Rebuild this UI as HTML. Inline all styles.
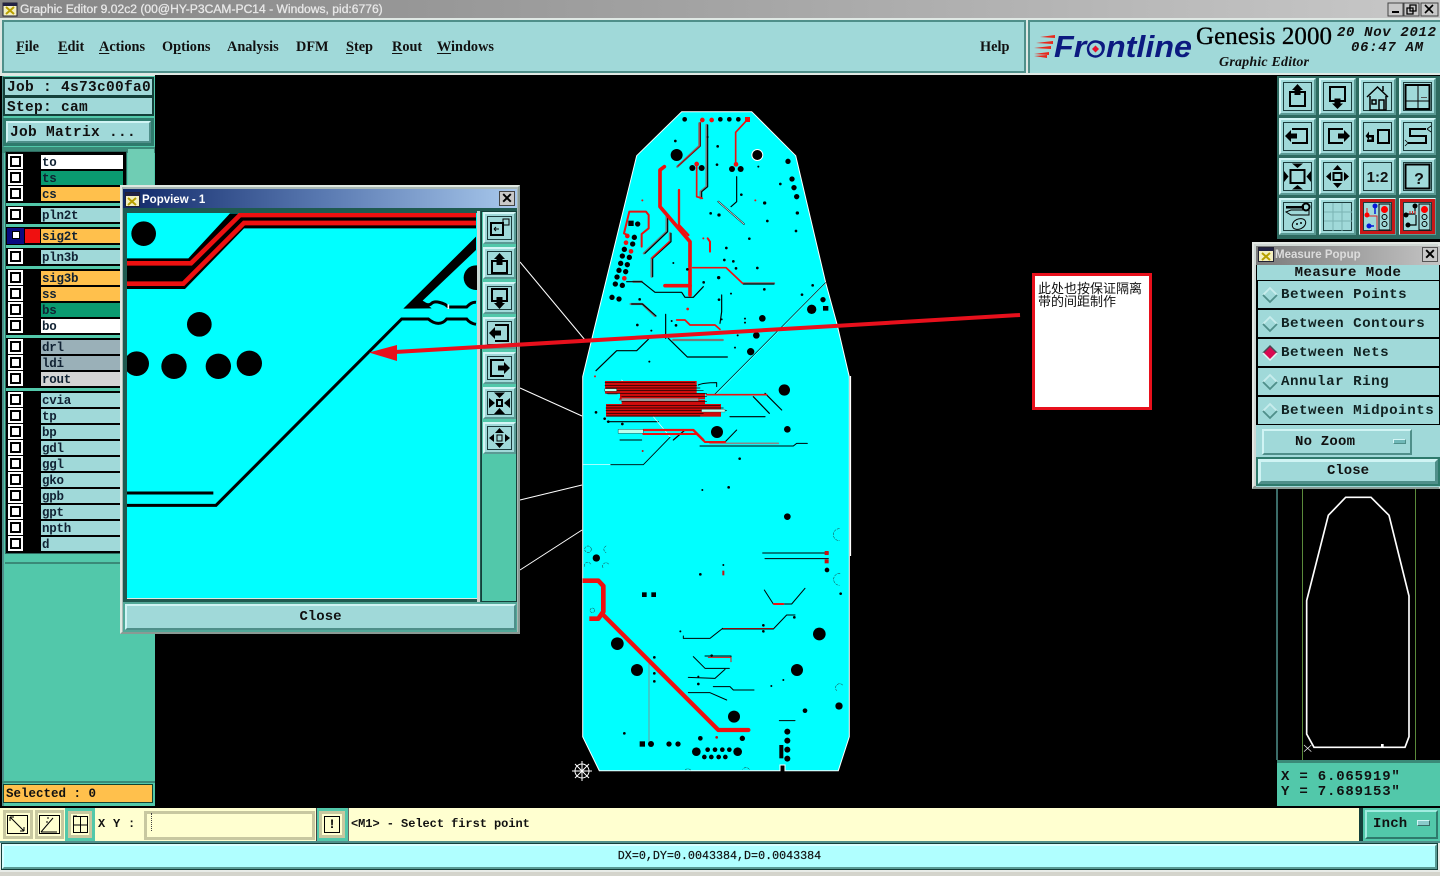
<!DOCTYPE html>
<html><head><meta charset="utf-8"><title>Graphic Editor</title>
<style>
html,body{margin:0;padding:0;background:#000;width:1440px;height:876px;overflow:hidden}
div{position:absolute;box-sizing:border-box}
svg{position:absolute;left:0;top:0}
.m{font-family:"Liberation Mono",monospace;font-weight:bold;color:#111;white-space:pre}
.s{font-family:"Liberation Serif",serif;font-weight:bold;color:#111;font-size:14.3px;white-space:pre;top:39px}
.s u{text-decoration-thickness:1px;text-underline-offset:2px}
.lb{left:41px;width:82px;height:14px;font:bold 12.5px/16px "Liberation Mono",monospace;color:#123;padding-left:1px;background:#a0d9d9;letter-spacing:-.25px;white-space:pre;overflow:hidden}
.cb{left:12px;width:7px;height:7px;background:#fff;box-shadow:0 0 0 2px #000,0 0 0 4px #fff}
.o{background:#ffc04c}.g{background:#0a9a70}.w{background:#fff}.d{background:#9ab0b8}
.sep{left:6px;width:120px;height:3px;background:#52c8aa}
.bev{background:#a0d9d9;border:2px solid;border-color:#d0f4f4 #4f8f8a #4f8f8a #d0f4f4}
.row{left:1258px;width:181px;height:27px;background:#a0d9d9;font:bold 14.2px/28px "Liberation Mono",monospace;letter-spacing:.5px;padding-left:23px;color:#122;white-space:pre}
.ttl{font:bold 11px/18px "Liberation Sans",sans-serif;white-space:pre}
</style></head><body>

<!-- title bar -->
<div style="left:0;top:0;width:1440px;height:18px;background:linear-gradient(90deg,#858585,#a4a4a4 50%,#c8c8c8)"></div>
<div class="ttl" style="left:20px;top:0;color:#e8e8e8;font-size:12.1px;font-weight:normal;-webkit-text-stroke:.3px #e8e8e8">Graphic Editor 9.02c2 (00@HY-P3CAM-PC14 - Windows, pid:6776)</div>
<div style="left:0;top:18px;width:1440px;height:58px;background:#e0e8e4"></div>
<div style="left:2px;top:20px;width:1024px;height:53px;background:#a0d9d9;border:2px solid;border-color:#4f8f8a #4f8f8a #4f8f8a #4f8f8a"></div>
<div style="left:1028px;top:20px;width:412px;height:53px;background:#a0d9d9;border-top:2px solid #4f8f8a;border-left:2px solid #4f8f8a"></div>

<div class="s" style="left:16px"><u>F</u>ile</div>
<div class="s" style="left:58px"><u>E</u>dit</div>
<div class="s" style="left:99px"><u>A</u>ctions</div>
<div class="s" style="left:162px">O<u>p</u>tions</div>
<div class="s" style="left:227px">Analysis</div>
<div class="s" style="left:296px">DFM</div>
<div class="s" style="left:346px"><u>S</u>tep</div>
<div class="s" style="left:392px"><u>R</u>out</div>
<div class="s" style="left:437px"><u>W</u>indows</div>
<div class="s" style="left:980px">Help</div>

<!-- canvas black -->
<div style="left:155px;top:75px;width:1285px;height:733px;background:#000"></div>

<!-- PCB + logo layer -->
<svg width="1440" height="876" viewBox="0 0 1440 876">
 <!-- window icon -->
 <rect x="3" y="3" width="14" height="13" fill="#f4f0c0" stroke="#223"/><rect x="3" y="3" width="14" height="3" fill="#224"/><path d="M6 7l8 7M14 7l-8 7" stroke="#b8a000" stroke-width="2"/>
 <!-- window ctl -->
 <g font-family="Liberation Sans" font-size="11" font-weight="bold">
  <rect x="1388" y="3" width="15" height="13" fill="#c8c8c8" stroke="#444"/><rect x="1392" y="11" width="7" height="2" fill="#000"/>
  <rect x="1404" y="3" width="15" height="13" fill="#c8c8c8" stroke="#444"/><path d="M1410 5h6v6h-6zM1407 8h6v6h-6z" fill="none" stroke="#000" stroke-width="1.3"/>
  <rect x="1421" y="3" width="17" height="13" fill="#c8c8c8" stroke="#444"/><path d="M1425 5l8 8M1433 5l-8 8" stroke="#000" stroke-width="1.6"/>
 </g>
 <!-- Frontline logo -->
 <path d="M1055 35l-15 2 15 1zM1053 41l-17 2 17 1zM1051 46l-17 2 17 1zM1049 52l-15 2 15 1zM1047 55l-13 1 13 2z" fill="#e8281c"/>
 <text x="1054" y="57" font-family="Liberation Sans" font-weight="bold" font-style="italic" font-size="31" fill="#0c1a80" textLength="138" lengthAdjust="spacingAndGlyphs">Frontline</text>
 <circle cx="1095.5" cy="49" r="7.5" fill="#a0d9d9" stroke="#0c1a80" stroke-width="2.4"/><path d="M1095.5 45.500l3.500 3.500-3.500 3.500-3.500-3.500z" fill="#e8102c"/>
 <text x="1196" y="44" font-family="Liberation Serif" font-size="25" fill="#000" stroke="#000" stroke-width=".3" textLength="136">Genesis 2000</text>
 <text x="1219" y="66" font-family="Liberation Serif" font-weight="bold" font-style="italic" font-size="14" fill="#111" textLength="90">Graphic Editor</text>
 <text x="1337" y="36" font-family="Liberation Mono" font-weight="bold" font-style="italic" font-size="14" fill="#111" textLength="99">20 Nov 2012</text>
 <text x="1351" y="51" font-family="Liberation Mono" font-weight="bold" font-style="italic" font-size="14" fill="#111" textLength="72">06:47 AM</text>

 <!-- PCB -->
 <path d="M681.700 111.700H751.700L795.700 155.700L825.700 282.700L836.700 323L849.300 376.700V736.700L838.300 770.700H785V765H780V770.700H599.300L582.700 736.700V376.700L594 330L636.700 155.700Z" fill="#0ff" stroke="#fff" stroke-width="1"/>
 <path d="M850.500 376V556" stroke="#fff" stroke-width="1.200"/>

 <!-- white leader lines -->
 <path d="M520 262L585 340M520 388L582 416M520 500L582 485M520 570L582 530" stroke="#fff" stroke-width="1" fill="none"/>

 <!-- PCB upper in zoom coords -->
 <g transform="translate(570,100) scale(.33333)" fill="none" stroke-linecap="round" stroke-linejoin="round">
  <g stroke="#777" stroke-width="7">
   <path d="M322,200L388,138V70M410,75V260L392,275V295M222,460L290,395V345M245,530V475L300,425V400M182,612H217L255,648M310,720H458M520,550H612M150,898H385M115,880H140M190,545H215"/>
  </g>
  <g stroke="#000" stroke-width="3.500">
   <path d="M324,198L391,138V68M413,75V260L395,275V295M500,230V305L483,320M225,460L293,395V345M248,530V475L303,425V400M170,545H215L255,577H335L345,592H370L400,560M185,612H217L258,648M287,643V715M295,715L352,771H472M78,812L140,752H200L235,718M455,585V635L450,670M520,552H612M585,880L635,930M550,890L598,940M112,965H265M480,950H585M345,990L310,1020"/>
  </g>
  <path d="M432,885L767,548" stroke="#000" stroke-width="2"/>
  <path d="M437,885L767,550" stroke="#fff" stroke-width="1"/>
  <path d="M445,305L522,372" stroke="#000" stroke-width="5"/><path d="M445,305L522,372" stroke="#fff" stroke-width="2"/>
  <path d="M155,840L250,950L300,1010" stroke="#fff" stroke-width="2"/>
  <g stroke="#ee1010">
   <path d="M283,200L270,210V320L360,425V585" stroke-width="11"/>
   <path d="M285,557H360" stroke-width="11"/>
   <path d="M327,270V375L355,405" stroke-width="7"/>
   <path d="M368,503H468L518,550" stroke-width="5"/>
   <path d="M533,58L497,97V190" stroke-width="5"/>
   <path d="M380,195V290L397,295" stroke-width="5"/>
   <path d="M172,405L162,400L178,335H228L236,345V385L215,402V440" stroke-width="6"/>
   <path d="M413,415L420,425V455" stroke-width="6"/>
   <path d="M245,475L298,425" stroke-width="4"/>
   <path d="M320,660H345L360,675H435L450,688" stroke-width="5"/>
   <path d="M397,60L390,70V138L324,198" stroke-width="2"/>
   <path d="M410,884H590" stroke-width="5"/>
   <path d="M220,990H370L400,1020" stroke-width="7"/>
  </g>
  <!-- stripes -->
  <rect x="105" y="843" width="275" height="38" fill="#d00c0c"/>
  <rect x="150" y="880" width="255" height="18" fill="#d00c0c"/>
  <rect x="108" y="912" width="345" height="38" fill="#d00c0c"/>
  <rect x="155" y="900" width="250" height="12" fill="#d00c0c"/>
  <g stroke="#000" stroke-width="2">
   <path d="M105,848H375M105,856H380M108,864H390M105,872H400M110,880H410M155,890H410M155,905H410M110,916H450M108,924H460M108,932H470M110,940H400M110,948H390"/>
  </g>
  <rect x="105" y="866" width="35" height="8" fill="#bfe" stroke="#000"/>
  <rect x="155" y="895" width="230" height="8" fill="#999"/>
  <rect x="395" y="928" width="70" height="8" fill="#bfe" stroke="#333"/>
  <rect x="145" y="988" width="75" height="12" fill="#bfe" stroke="#000"/>
  <path d="M385,855Q400,848 440,848V860" stroke="#000" stroke-width="3"/>
  <!-- dots -->
  <g fill="#000" stroke="none">
   <circle cx="320" cy="165" r="18"/><circle cx="562" cy="165" r="18" fill="#fff"/><circle cx="562" cy="165" r="15"/>
   <circle cx="344" cy="58" r="7"/><circle cx="451" cy="58" r="7"/><circle cx="478" cy="58" r="7"/><circle cx="505" cy="58" r="7"/>
   <ellipse cx="367" cy="204" rx="9" ry="9"/><ellipse cx="395" cy="204" rx="9" ry="9"/><circle cx="486" cy="207" r="9"/><circle cx="512" cy="207" r="9"/>
   <circle cx="654" cy="184" r="8"/><circle cx="666" cy="237" r="8"/><circle cx="672" cy="263" r="8"/><circle cx="680" cy="290" r="8"/><circle cx="682" cy="339" r="5"/>
   <rect x="175" y="362" width="16" height="16"/><circle cx="203" cy="372" r="8"/><circle cx="193" cy="412" r="8"/><circle cx="188" cy="432" r="8"/>
   <circle cx="163" cy="448" r="8"/><circle cx="157" cy="468" r="8"/><circle cx="178" cy="472" r="8"/><circle cx="152" cy="490" r="8"/><circle cx="172" cy="494" r="8"/><circle cx="147" cy="511" r="8"/><circle cx="167" cy="515" r="8"/><circle cx="141" cy="531" r="8"/><circle cx="136" cy="552" r="8"/><circle cx="157" cy="556" r="8"/><circle cx="126" cy="592" r="8"/><circle cx="147" cy="597" r="8"/>
   <circle cx="725" cy="628" r="14"/><circle cx="759" cy="599" r="8"/><rect x="759" y="618" width="16" height="14"/><circle cx="577" cy="655" r="10"/><circle cx="559" cy="706" r="10"/><circle cx="542" cy="755" r="11"/>
   <circle cx="643" cy="870" r="17"/><circle cx="652" cy="988" r="10"/><circle cx="441" cy="996" r="18"/>
   <circle cx="316" cy="123" r="4"/><circle cx="413" cy="111" r="3"/><circle cx="443" cy="139" r="4"/><circle cx="441" cy="194" r="4"/><circle cx="565" cy="200" r="3"/><circle cx="631" cy="252" r="4"/><circle cx="514" cy="284" r="4"/><circle cx="584" cy="309" r="5"/><circle cx="422" cy="340" r="4"/><circle cx="447" cy="345" r="5"/><circle cx="592" cy="363" r="4"/><circle cx="678" cy="393" r="4"/><circle cx="538" cy="416" r="4"/><circle cx="469" cy="444" r="4"/><circle cx="463" cy="480" r="4"/><circle cx="490" cy="484" r="4"/><circle cx="562" cy="504" r="4"/><circle cx="498" cy="505" r="4"/><circle cx="352" cy="508" r="4"/><circle cx="310" cy="489" r="3"/><circle cx="446" cy="533" r="5"/><circle cx="401" cy="547" r="4"/><circle cx="583" cy="568" r="4"/><circle cx="728" cy="556" r="4"/><circle cx="696" cy="584" r="4"/><circle cx="483" cy="581" r="3"/><circle cx="447" cy="599" r="4"/><circle cx="209" cy="598" r="4"/><circle cx="202" cy="675" r="4"/><circle cx="244" cy="692" r="3"/><circle cx="305" cy="663" r="3"/><circle cx="318" cy="676" r="4"/><circle cx="455" cy="658" r="3"/><circle cx="525" cy="656" r="3"/><circle cx="525" cy="668" r="3"/><circle cx="503" cy="706" r="3"/><circle cx="495" cy="743" r="3"/><circle cx="238" cy="785" r="3"/><circle cx="78" cy="937" r="4"/><circle cx="104" cy="956" r="4"/><circle cx="157" cy="972" r="4"/><circle cx="115" cy="965" r="4"/>
  </g>
  <g fill="#ee1010" stroke="none">
   <circle cx="397" cy="60" r="7"/><circle cx="425" cy="60" r="7"/><rect x="525" y="51" width="15" height="15"/><circle cx="380" cy="192" r="7"/><circle cx="498" cy="193" r="7"/><circle cx="172" cy="408" r="7"/><circle cx="168" cy="428" r="7"/><circle cx="183" cy="454" r="7"/><circle cx="163" cy="535" r="7"/><circle cx="217" cy="301" r="3"/><circle cx="556" cy="301" r="3"/><circle cx="75" cy="829" r="3"/><circle cx="400" cy="415" r="3"/><circle cx="353" cy="627" r="4"/>
  </g>
 </g>

 <!-- PCB lower in zoom coords -->
 <g transform="translate(570,430) scale(.33333)" fill="none" stroke-linecap="round" stroke-linejoin="round">
  <path d="M38,103H122" stroke="#fff" stroke-width="2"/>
  <path d="M122,104H220L300,22" stroke="#000" stroke-width="2.500"/>
  <path d="M420,40H625" stroke="#888" stroke-width="5"/>
  <path d="M465,36L500,0M390,48H670L680,40H712M150,30H215M578,369H775M585,386H775M583,480L610,522H665L705,475M458,597H610L650,555H675M340,618V625H420L458,595M405,678H483V695M370,680L405,715H478M355,742L435,745L465,718M355,788H420L470,810M430,770H480L490,780H552M628,872H675" stroke="#000" stroke-width="3"/>
  <path d="M237,700V940" stroke="#888" stroke-width="2.500"/>
  <g stroke="#ee1010">
   <path d="M220,12H380L405,36H465" stroke-width="6"/>
   <path d="M38,452H85L100,468V545L85,566H58" stroke-width="14" stroke-linecap="butt"/>
   <path d="M100,555L445,900H535" stroke-width="13"/>
   <path d="M612,522H640" stroke-width="6"/>
   <path d="M460,595H610" stroke-width="2"/>
   <path d="M415,682H483V695" stroke-width="3"/>
  </g>
  <g fill="#000" stroke="none">
   <circle cx="142" cy="641" r="19"/><circle cx="201" cy="720" r="18"/><circle cx="748" cy="612" r="19"/><circle cx="681" cy="720" r="18"/><circle cx="492" cy="860" r="18"/><circle cx="807" cy="828" r="11"/><circle cx="652" cy="260" r="10"/><circle cx="79" cy="384" r="11"/>
   <circle cx="379" cy="965" r="13"/><circle cx="503" cy="965" r="13"/><circle cx="413" cy="959" r="7"/><circle cx="435" cy="959" r="7"/><circle cx="457" cy="959" r="7"/><circle cx="478" cy="959" r="7"/><circle cx="403" cy="981" r="7"/><circle cx="424" cy="981" r="7"/><circle cx="446" cy="981" r="7"/><circle cx="466" cy="981" r="7"/>
   <rect x="209" y="934" width="16" height="16"/><circle cx="243" cy="942" r="9"/><circle cx="297" cy="942" r="8"/><circle cx="324" cy="942" r="8"/><circle cx="391" cy="925" r="7"/><circle cx="517" cy="925" r="8"/>
   <circle cx="652" cy="905" r="9"/><circle cx="652" cy="932" r="9"/><circle cx="652" cy="959" r="9"/><circle cx="652" cy="986" r="9"/><rect x="628" y="945" width="12" height="40"/>
   <rect x="216" y="487" width="14" height="14"/><rect x="244" y="487" width="14" height="14"/><circle cx="771" cy="420" r="7"/><circle cx="705" cy="842" r="7"/><circle cx="509" cy="86" r="4"/><circle cx="476" cy="172" r="4"/><circle cx="397" cy="180" r="3"/><circle cx="391" cy="433" r="4"/><circle cx="460" cy="405" r="3"/><circle cx="812" cy="491" r="4"/><circle cx="580" cy="586" r="4"/><circle cx="580" cy="604" r="4"/><circle cx="673" cy="562" r="4"/><circle cx="331" cy="604" r="3"/><circle cx="253" cy="682" r="4"/><circle cx="253" cy="730" r="4"/><circle cx="253" cy="754" r="4"/><circle cx="163" cy="910" r="4"/><circle cx="604" cy="768" r="3"/><circle cx="640" cy="750" r="3"/><circle cx="385" cy="762" r="4"/><circle cx="425" cy="677" r="4"/><circle cx="385" cy="740" r="3"/>
  </g>
  <g fill="#c81010" stroke="none"><rect x="764" y="363" width="12" height="12"/><rect x="764" y="388" width="12" height="12"/><rect x="457" y="422" width="6" height="14"/><circle cx="440" cy="922" r="4"/><circle cx="218" cy="63" r="3"/></g>
  <g stroke="#222" stroke-width="1.500" stroke-dasharray="7 4">
   <circle cx="54" cy="358" r="10"/><path d="M108,348A11,11 0 0 0 108,368M62,402A10,10 0 0 0 44,412M116,402A10,10 0 0 0 100,415M808,296A12,12 0 0 0 808,332M810,430A14,14 0 0 0 808,466M818,765A11,11 0 0 0 800,782M362,1020A12,12 0 0 0 345,1020M538,1018A12,12 0 0 0 518,1018"/>
   <circle cx="67" cy="541" r="7"/>
  </g>
 </g>

 <!-- crosshair -->
 <g stroke="#fff" stroke-width="1" fill="none"><circle cx="582" cy="771" r="7"/><path d="M582 761v20M572 771h20M575 764l14 14M589 764l-14 14"/></g>

 <!-- minimap -->
 <path d="M1277 489V760" stroke="#4f8f8a" stroke-width="1.500"/>
 <path d="M1302.500 489V760M1415.500 489V760" stroke="#5a8a3a" stroke-width="1"/>
 <g transform="translate(1270,490) scale(.33333)">
  <path d="M227,22H303L357,76L417,318V740L405,772H132L110,732V332L175,76Z" fill="none" stroke="#fff" stroke-width="5"/>
  <rect x="333" y="762" width="8" height="10" fill="#fff"/>
  <path d="M102,765L124,785M124,765L102,785" stroke="#fff" stroke-width="2"/>
 </g>

 <!-- toolbar background -->
 <rect x="1277" y="76" width="163" height="163" fill="#2e6a60"/>
 <defs>
  <g id="tb"><rect width="37" height="37" fill="#a0d9d9"/><path d="M0 37V0H37L35 2H2V35Z" fill="#d4f6f6"/><path d="M37 0V37H0L2 35H35V2Z" fill="#5a9a94"/><rect x="4.500" y="4.500" width="28" height="28" fill="none" stroke="#1c3c3c"/></g>
  <g id="pb"><rect width="33" height="32" fill="#a0d9d9"/><path d="M0 32V0H33L31 2H2V30Z" fill="#d4f6f6"/><path d="M33 0V32H0L2 30H31V2Z" fill="#5a9a94"/><rect x="4.500" y="4.500" width="24" height="23" fill="none" stroke="#1c3c3c"/></g>
 </defs>
 <g fill="#000" stroke="none">
  <!-- row1 -->
  <g transform="translate(1279,78)"><use href="#tb"/><rect x="11" y="14" width="15" height="14" fill="none" stroke="#000" stroke-width="2"/><path d="M18.500 6L24 12H21.500V17H15.500V12H13Z"/></g>
  <g transform="translate(1319,78)"><use href="#tb"/><rect x="11" y="9" width="15" height="14" fill="none" stroke="#000" stroke-width="2"/><path d="M18.500 31L13 25.500H15.500V20.500H21.500V25.500H24Z"/></g>
  <g transform="translate(1359,78)"><use href="#tb"/><g fill="none" stroke="#000" stroke-width="1.500"><path d="M8 19L18.500 9L29 19M11 18V32H27V18M20 32V22H25V32M13 22H17V26H13ZM24 8V13"/></g></g>
  <g transform="translate(1399,78)"><use href="#tb"/><rect x="6.500" y="7" width="24" height="24" fill="none" stroke="#000" stroke-width="2"/><path d="M19 7V31M7 23H31" stroke="#000" fill="none" stroke-width="1"/><path d="M22 19h6v1h-6z" fill="#555"/></g>
  <!-- row2 -->
  <g transform="translate(1279,118)"><use href="#tb"/><path d="M13 11H28V25H13" fill="none" stroke="#000" stroke-width="2"/><path d="M6 18L12 12V15.500H18V20.500H12V24Z"/></g>
  <g transform="translate(1319,118)"><use href="#tb"/><path d="M24 11H10V25H24" fill="none" stroke="#000" stroke-width="2"/><path d="M31 18L25 12V15.500H19V20.500H25V24Z"/></g>
  <g transform="translate(1359,118)"><use href="#tb"/><rect x="19" y="12" width="11" height="13" fill="none" stroke="#000" stroke-width="2"/><path d="M11 17H15V24H8V21.500H12.500V19.500H10V22L6.500 18L10 13.500V17Z"/></g>
  <g transform="translate(1399,118)"><use href="#tb"/><path d="M27 11H11V18H27V25H9" fill="none" stroke="#000" stroke-width="2"/><path d="M28 11L32 8M28 11L32 14M9 25L6 22M9 25L6 28" stroke="#000" stroke-width=".8" fill="none"/></g>
  <!-- row3 -->
  <g transform="translate(1279,158)"><use href="#tb"/><rect x="11.500" y="12" width="14" height="13" fill="none" stroke="#000" stroke-width="2"/><path d="M18.500 10L13 5.500H24ZM18.500 27L13 31.500H24ZM9.500 18.500L5 13V24ZM27.500 18.500L32 13V24Z"/></g>
  <g transform="translate(1319,158)"><use href="#tb"/><rect x="14.500" y="15" width="8" height="7" fill="none" stroke="#000" stroke-width="2"/><path d="M18.500 7L14 12H23ZM18.500 30L14 25H23ZM7 18.500L12 14V23ZM30 18.500L25 14V23Z"/></g>
  <g transform="translate(1359,158)"><use href="#tb"/><text x="18.500" y="24" text-anchor="middle" font-family="Liberation Sans" font-weight="bold" font-size="15" fill="#111">1:2</text></g>
  <g transform="translate(1399,158)"><use href="#tb"/><rect x="6.500" y="6.500" width="24" height="24" fill="none" stroke="#000" stroke-width="2"/><text x="20" y="26" text-anchor="middle" font-family="Liberation Sans" font-weight="bold" font-size="16" fill="#111">?</text></g>
  <!-- row4 -->
  <g transform="translate(1279,198)"><use href="#tb"/><rect x="7" y="8" width="18" height="2.500"/><circle cx="27" cy="9" r="3.500" fill="none" stroke="#000" stroke-width="2"/><path d="M7 14L12 12H30V17H12Z" fill="none" stroke="#000"/><ellipse cx="20" cy="26" rx="7" ry="5" fill="none" stroke="#000" transform="rotate(-25 20 26)"/><circle cx="18" cy="26" r="1"/><circle cx="22" cy="25" r="1"/></g>
  <g transform="translate(1319,198)"><use href="#tb"/><path d="M14 5V33M23 5V33M5 14H33M5 23H33" stroke="#7ab4b4" fill="none"/></g>
  <g transform="translate(1359,198)"><use href="#tb"/><rect x="2.500" y="2.500" width="32" height="32" fill="none" stroke="#c81818" stroke-width="3"/><rect x="20" y="6" width="11" height="26" fill="none" stroke="#000"/><circle cx="25.500" cy="11.500" r="3.500" fill="#f00"/><circle cx="25.500" cy="19" r="2.500" fill="none" stroke="#000"/><circle cx="25.500" cy="26" r="2.500" fill="none" stroke="#000"/><path d="M8 10V18M8 18H18V32" stroke="#e02020" fill="none"/><path d="M16 9V16M9 28H15" stroke="#0818d8" fill="none" stroke-width="1.500"/><circle cx="16" cy="8" r="2.500" fill="#0818d8"/><circle cx="8" cy="17" r="2.500" fill="#f00"/><circle cx="10" cy="28" r="2.500" fill="#0818d8"/></g>
  <g transform="translate(1399,198)"><use href="#tb"/><rect x="2.500" y="2.500" width="32" height="32" fill="none" stroke="#c81818" stroke-width="3"/><rect x="20" y="6" width="11" height="26" fill="none" stroke="#000"/><circle cx="25.500" cy="11.500" r="3.500" fill="#f00"/><circle cx="25.500" cy="19" r="2.500" fill="none" stroke="#000"/><circle cx="25.500" cy="26" r="2.500" fill="none" stroke="#000"/><path d="M16 9V16H8M17 17V27H10" stroke="#000" fill="none" stroke-width="1.200"/><path d="M11 16V13M13.500 16V13M16 16V13" stroke="#e02020"/><circle cx="16" cy="8" r="2.500"/><circle cx="7" cy="17" r="2.500"/><circle cx="9" cy="27" r="2.500"/></g>
 </g>
</svg>

<!-- callout -->
<div style="left:1032px;top:273px;width:120px;height:137px;background:#fff;border:3px solid #e8101c;padding:5px 0 0 3px;font:13px/13px 'Noto Sans CJK SC',sans-serif;color:#111">此处也按保证隔离<br>带的间距制作</div>

<!-- left panel -->
<div style="left:2px;top:76px;width:153px;height:730px;background:#52c8aa;border-left:2px solid #4f8f8a"></div>
<div class="m" style="left:3px;top:77px;width:151px;height:20px;background:#a0d9d9;border:2px solid #14403a;font-size:14.500px;line-height:19px;padding-left:2px;letter-spacing:.3px">Job : 4s73c00fa0</div>
<div class="m" style="left:3px;top:96px;width:151px;height:20px;background:#a0d9d9;border:2px solid #14403a;font-size:14.500px;line-height:20px;padding-left:2px;letter-spacing:.3px">Step: cam</div>
<div style="left:3px;top:118px;width:151px;height:28px;background:#2e7a6c"></div>
<div class="m bev" style="left:6px;top:121px;width:145px;height:22px;font-size:14.500px;line-height:20px;padding-left:2px;letter-spacing:.3px">Job Matrix ...</div>

<div style="left:2px;top:147px;width:153px;height:6px;background:#3a8a78"></div>
<div style="left:128px;top:149px;width:26px;height:60px;background:#6fcdb4"></div>
<div style="left:5px;top:151px;width:122px;height:403px;background:#000;border:1px solid #2e6a60"></div>

<div class="cb" style="top:158px"></div><div class="lb w" style="top:155px">to</div>
<div class="cb" style="top:174px"></div><div class="lb g" style="top:171px">ts</div>
<div class="cb" style="top:190px"></div><div class="lb o" style="top:187px">cs</div>
<div class="sep" style="top:203px"></div>
<div class="cb" style="top:211px"></div><div class="lb" style="top:208px">pln2t</div>
<div class="sep" style="top:224px"></div>
<div style="left:7px;top:228px;width:17px;height:16px;background:#0a0a80"></div><div class="cb" style="top:232px;box-shadow:0 0 0 1px #000,0 0 0 1px #fff;width:6px;height:6px;left:13px"></div>
<div style="left:25px;top:229px;width:15px;height:14px;background:#f01010"></div>
<div class="lb o" style="top:229px">sig2t</div>
<div class="sep" style="top:245px"></div>
<div class="cb" style="top:253px"></div><div class="lb" style="top:250px">pln3b</div>
<div class="sep" style="top:266px"></div>
<div class="cb" style="top:274px"></div><div class="lb o" style="top:271px">sig3b</div>
<div class="cb" style="top:290px"></div><div class="lb o" style="top:287px">ss</div>
<div class="cb" style="top:306px"></div><div class="lb g" style="top:303px">bs</div>
<div class="cb" style="top:322px"></div><div class="lb w" style="top:319px">bo</div>
<div class="sep" style="top:335px"></div>
<div class="cb" style="top:343px"></div><div class="lb d" style="top:340px">drl</div>
<div class="cb" style="top:359px"></div><div class="lb d" style="top:356px">ldi</div>
<div class="cb" style="top:375px"></div><div class="lb" style="top:372px;background:#d4d4d4">rout</div>
<div class="sep" style="top:388px"></div>
<div class="cb" style="top:396px"></div><div class="lb" style="top:393px">cvia</div>
<div class="cb" style="top:412px"></div><div class="lb" style="top:409px">tp</div>
<div class="cb" style="top:428px"></div><div class="lb" style="top:425px">bp</div>
<div class="cb" style="top:444px"></div><div class="lb" style="top:441px">gdl</div>
<div class="cb" style="top:460px"></div><div class="lb" style="top:457px">ggl</div>
<div class="cb" style="top:476px"></div><div class="lb" style="top:473px">gko</div>
<div class="cb" style="top:492px"></div><div class="lb" style="top:489px">gpb</div>
<div class="cb" style="top:508px"></div><div class="lb" style="top:505px">gpt</div>
<div class="cb" style="top:524px"></div><div class="lb" style="top:521px">npth</div>
<div class="cb" style="top:540px"></div><div class="lb" style="top:537px">d</div>
<div style="left:5px;top:562px;width:149px;height:2px;background:#3a8a78"></div>
<div style="left:2px;top:781px;width:153px;height:2px;background:#3a8a78"></div>
<div class="m" style="left:3px;top:784px;width:150px;height:19px;background:#ffc04c;border:1px solid #143;font-size:12.500px;line-height:19px;padding-left:2px">Selected : 0</div>

<!-- Measure popup -->
<div style="left:1252px;top:242px;width:188px;height:247px;background:#d0d8d4;border:2px solid #e4e8e4;border-bottom:3px solid #8a9a94"></div>
<div style="left:1256px;top:246px;width:184px;height:19px;background:linear-gradient(90deg,#7a7a7a,#c4c4c4)"></div>
<svg style="left:1258px;top:247px" width="18" height="16"><rect x=".5" y=".5" width="15" height="14" fill="#f4f0c0" stroke="#223"/><rect x="1" y="1" width="14" height="3" fill="#224"/><path d="M4 6l8 7M12 6l-8 7" stroke="#b8a000" stroke-width="2"/></svg>
<div class="ttl" style="left:1275px;top:246px;color:#dcdcdc;font-size:11.500px;line-height:19px">Measure Popup</div>
<div style="left:1422px;top:247px;width:16px;height:15px;background:#c8c8c8;border:1px solid #555;font:bold 14px/13px 'Liberation Sans',sans-serif;text-align:center;color:#000">✕</div>
<div style="left:1256px;top:265px;width:184px;height:160px;background:#000"></div>
<div class="m" style="left:1257px;top:265px;width:182px;height:15px;background:#a0d9d9;font-size:14px;line-height:17px;text-align:center;letter-spacing:.5px;overflow:hidden">Measure Mode</div>
<div class="row" style="top:281px">Between Points</div>
<div class="row" style="top:310px">Between Contours</div>
<div class="row" style="top:339px">Between Nets</div>
<div class="row" style="top:368px">Annular Ring</div>
<div class="row" style="top:397px">Between Midpoints</div>
<svg style="left:1260px;top:285px" width="20" height="140">
 <defs><g id="dm"><path d="M10 4l6 6-6 6-6-6z" fill="#a0d9d9"/><path d="M3 10l7-7 7 7" fill="none" stroke="#c8ecec" stroke-width="1.800"/><path d="M3 10l7 7 7-7" fill="none" stroke="#4f8f8a" stroke-width="1.800"/></g></defs>
 <use href="#dm"/><use href="#dm" y="29"/>
 <path d="M10 61l7 7-7 7-7-7z" fill="#d80850"/><path d="M3 68l7-7 7 7" fill="none" stroke="#4a4a54" stroke-width="1.500"/><path d="M3 68l7 7 7-7" fill="none" stroke="#e8f4f4" stroke-width="1.500"/>
 <use href="#dm" y="87"/><use href="#dm" y="116"/>
</svg>
<div style="left:1256px;top:425px;width:184px;height:62px;background:#a0d9d9"></div>
<div class="m bev" style="left:1262px;top:429px;width:150px;height:26px;font-size:14px;line-height:22px;padding-left:31px;letter-spacing:.2px">No Zoom</div>
<div style="left:1393px;top:439px;width:13px;height:5px;background:#6fb8b8;border:1px solid;border-color:#d4f6f6 #4f8f8a #4f8f8a #d4f6f6"></div>
<div style="left:1256px;top:457px;width:184px;height:29px;background:#2e7a6c"></div>
<div class="m bev" style="left:1258px;top:459px;width:180px;height:25px;font-size:14px;line-height:19px;text-align:center;border-width:3px">Close</div>

<!-- coords -->
<div class="m" style="left:1277px;top:760px;width:163px;height:46px;background:#52c8aa;border-top:3px solid #3a8a78;padding:7px 0 0 4px;font-size:14px;line-height:15px;letter-spacing:.8px">X = 6.065919"
Y = 7.689153"</div>

<!-- bottom bar -->
<div style="left:0;top:806px;width:1440px;height:3px;background:#000"></div>
<div style="left:0;top:808px;width:1440px;height:33px;background:#ffffd0"></div>
<div style="left:3px;top:810px;width:30px;height:29px;background:#ffffd0;border:3px solid #c8c8a0"></div>
<div style="left:35px;top:810px;width:29px;height:29px;background:#ffffd0;border:3px solid #c8c8a0"></div>
<div style="left:65px;top:808px;width:30px;height:33px;background:#52c8aa"></div>
<div style="left:68px;top:811px;width:24px;height:27px;background:#ffffd0;border:3px solid #c8c8a0"></div>
<svg style="left:0;top:808px" width="350" height="33" fill="none" stroke="#000">
 <rect x="7.500" y="7.500" width="20" height="18"/><path d="M10 9l14 14M10 9h4M10 9v4M24 23h-4M24 23v-4"/>
 <rect x="39.500" y="7.500" width="20" height="18"/><path d="M41 24l12-14M41 24h16M47 10h2M46 14h2"/>
 <rect x="73.500" y="8.500" width="14" height="16"/><path d="M80.500 8v17M74 17h14M73 8h4"/>
</svg>
<div class="m" style="left:98px;top:817px;font-size:12px;line-height:15px;letter-spacing:.3px">X Y :</div>
<div style="left:144px;top:811px;width:171px;height:29px;background:#ffffd0;border:3px solid #c8c8a0"></div>
<div style="left:151px;top:813px;width:1px;height:18px;border-left:1px dotted #444"></div>
<div style="left:316px;top:808px;width:32px;height:33px;background:#52c8aa;border-left:1px solid #444"></div>
<div style="left:319px;top:811px;width:26px;height:27px;background:#ffffd0;border:3px solid #c8c8a0"></div>
<div style="left:324px;top:816px;width:16px;height:17px;border:1px solid #000;font:bold 13px/15px 'Liberation Mono',monospace;text-align:center;color:#000">!</div>
<div style="left:348px;top:808px;width:1px;height:33px;background:#666"></div>
<div class="m" style="left:351px;top:817px;font-size:12px;line-height:15px;letter-spacing:-.05px">&lt;M1&gt; - Select first point</div>
<div style="left:1359px;top:808px;width:81px;height:33px;background:#14403a"></div>
<div style="left:1362px;top:808px;width:78px;height:33px;background:#52c8aa;border-left:1px solid #14403a"></div>
<div class="m" style="left:1365px;top:810px;width:73px;height:29px;background:#52c8aa;border:2px solid;border-color:#a0ece0 #2e7a6c #2e7a6c #a0ece0;font-size:14px;line-height:25px;padding-left:6px;letter-spacing:.2px">Inch</div>
<div style="left:1417px;top:820px;width:13px;height:6px;background:#8acaca;border:1px solid;border-color:#d4f6f6 #3a6a64 #3a6a64 #d4f6f6"></div>

<div style="left:0;top:841px;width:1440px;height:31px;background:#e8ece8"></div>
<div style="left:0;top:841px;width:1440px;height:2px;background:#4f8f8a"></div>
<div class="m" style="left:2px;top:844px;width:1435px;height:25px;background:#b0ffff;border:2px solid;border-color:#d8ffff #5a9a94 #5a9a94 #d8ffff;outline:1px solid #14403a;font-size:11.700px;line-height:20px;text-align:center;font-weight:normal;-webkit-text-stroke:.2px #111">DX=0,DY=0.0043384,D=0.0043384</div>
<div style="left:0;top:872px;width:1440px;height:4px;background:#d4d4cc"></div>

<!-- Popview -->
<div style="left:120px;top:185px;width:400px;height:449px;background:#a8b8b4;border:2px solid #dfe8e2;border-right-color:#8a9a94;border-bottom-color:#8a9a94"></div>
<div style="left:123px;top:189px;width:394px;height:19px;background:linear-gradient(90deg,#102868,#5878b0 50%,#a8c8ec)"></div>
<svg style="left:125px;top:192px" width="16" height="15"><rect x=".5" y=".5" width="14" height="14" fill="#f4f0c0" stroke="#223"/><rect x="1" y="1" width="13" height="3" fill="#224"/><path d="M3 6l8 7M11 6l-8 7" stroke="#b8a000" stroke-width="2"/></svg>
<div class="ttl" style="left:142px;top:191px;color:#fff;font-size:11.500px">Popview - 1</div>
<div style="left:499px;top:191px;width:16px;height:15px;background:#c8c8c8;border:1px solid #444;font:bold 14px/13px 'Liberation Sans',sans-serif;text-align:center;color:#000">✕</div>
<div style="left:123px;top:208px;width:394px;height:395px;background:#1f5a50"></div>
<div style="left:477px;top:211px;width:3px;height:391px;background:#c8d8d4"></div>
<div style="left:481px;top:211px;width:36px;height:391px;background:#52c8aa;border:1px solid #14403a"></div>
<div style="left:123px;top:602px;width:394px;height:30px;background:#52a898"></div>
<div class="m bev" style="left:125px;top:604px;width:391px;height:26px;font-size:14px;line-height:23px;text-align:center;border-width:2px">Close</div>

<svg style="left:0;top:0;z-index:5" width="1440" height="876">
 <defs><clipPath id="pv"><rect x="127" y="213" width="350" height="385"/></clipPath></defs>
 <rect x="127" y="213" width="350" height="385" fill="#0ff"/>
 <path d="M127 598.500H477" stroke="#dfe8e2"/>
 <g clip-path="url(#pv)"><g transform="translate(120,185) scale(.33333)">
  <path d="M20,220H205L330,85H1068V130H372L195,312H20Z" fill="#000"/>
  <path d="M20,235H213L360,90H1068" fill="none" stroke="#ee1010" stroke-width="14"/>
  <path d="M20,296H190L372,114H1068" fill="none" stroke="#ee1010" stroke-width="14"/>
  <g fill="#000">
   <circle cx="71" cy="146" r="37"/><circle cx="238" cy="418" r="37"/><circle cx="50" cy="536" r="37"/><circle cx="162" cy="544" r="38"/><circle cx="295" cy="544" r="38"/><circle cx="388" cy="535" r="38"/><circle cx="1068" cy="278" r="37"/>
   <path d="M850,371L1068,155V195L908,347L935,370Z"/>
  </g>
  <g fill="none" stroke="#000" stroke-width="9">
   <path d="M908,352Q925,365 935,355T975,358L985,366H1040Q1055,350 1068,352"/>
   <path d="M20,924H280"/>
   <path d="M20,961H288L845,402H925Q940,415 955,415T980,402H1040Q1050,415 1068,418"/>
  </g>
  <path d="M985,358V372" stroke="#fff" stroke-width="5"/>
 </g></g>
 <g>
  <g transform="translate(483,212)"><use href="#pb"/><rect x="8" y="11" width="12" height="12" fill="none" stroke="#000" stroke-width="2"/><rect x="20" y="7" width="6" height="6" fill="none" stroke="#000"/><path d="M11 17h5M11 17l2-2M11 17l2 2" stroke="#000" fill="none"/></g>
  <g transform="translate(483,247)"><use href="#pb"/><rect x="9" y="14" width="15" height="12" fill="none" stroke="#000" stroke-width="2"/><path d="M16.500 6L22 12H19.500V18H13.500V12H11Z"/></g>
  <g transform="translate(483,282)"><use href="#pb"/><rect x="9" y="7" width="15" height="12" fill="none" stroke="#000" stroke-width="2"/><path d="M16.500 27L11 21H13.500V15H19.500V21H22Z"/></g>
  <g transform="translate(483,317)"><use href="#pb"/><path d="M12 8H25V24H12" fill="none" stroke="#000" stroke-width="2"/><path d="M6 16L12 10V13.500H18V18.500H12V22Z"/></g>
  <g transform="translate(483,352)"><use href="#pb"/><path d="M21 8H8V24H21" fill="none" stroke="#000" stroke-width="2"/><path d="M27 16L21 10V13.500H15V18.500H21V22Z"/></g>
  <g transform="translate(483,387)"><use href="#pb"/><rect x="14" y="13" width="5" height="6" fill="none" stroke="#000" stroke-width="2"/><path d="M16.500 11L11 5.500H22ZM16.500 21L11 27H22ZM12 16L6 11V21ZM21 16L27 11V21Z"/></g>
  <g transform="translate(483,422)"><use href="#pb"/><rect x="14" y="13" width="5" height="6" fill="none" stroke="#000"/><path d="M16.500 6L12 11H21ZM16.500 26L12 21H21ZM6 16L11 12V20ZM27 16L22 12V20Z"/></g>
 </g>
 <!-- arrow -->
 <path d="M395 352L1020 315" stroke="#e8101c" stroke-width="4" fill="none"/>
 <path d="M369 352.500L397 345V361Z" fill="#e8101c"/>
</svg>
</body></html>
